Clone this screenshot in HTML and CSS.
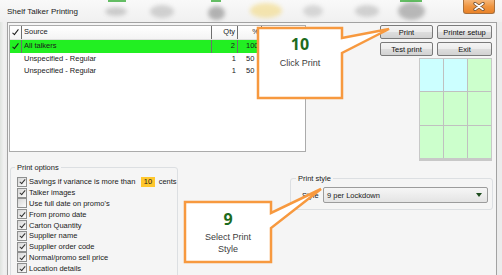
FILE: index.html
```html
<!DOCTYPE html>
<html lang="en">
<head>
    <meta charset="UTF-8">
    <title>Shelf Talker Printing</title>
    <link rel="stylesheet" href="styles.css">
</head>
<body>

<div class="window">
    <!-- Title bar (glass frame, desktop shows through) -->
    <div class="titlebar">
        <span class="blob b1"></span>
        <span class="blob b2"></span>
        <span class="blob b3"></span>
        <span class="blob b4"></span>
        <span class="blob b5"></span>
        <span class="blob b6"></span>
        <span class="blob b7"></span>
        <span class="speck s1"></span>
        <span class="speck s2"></span>
        <span class="speck s3"></span>
        <span class="title">Shelf Talker Printing</span>
        <span class="close">
            <svg width="12" height="9" viewBox="0 0 12 9">
                <path d="M2 1.5 L10 7.5 M10 1.5 L2 7.5" stroke="#6a4a30" stroke-width="3.2" stroke-linecap="round"/>
                <path d="M2 1.5 L10 7.5 M10 1.5 L2 7.5" stroke="#fff" stroke-width="1.6" stroke-linecap="round"/>
            </svg>
        </span>
    </div>

    <div class="client">
        <div class="top-row">
            <div class="listbox">
                <div class="lv-row lv-head">
                    <span class="col-chk"><i class="tick"></i></span>
                    <span class="col-src">Source</span>
                    <span class="col-qty">Qty</span>
                    <span class="col-pct">%</span>
                    <span class="col-rest"></span>
                </div>
                <div class="lv-row lv-sel">
                    <span class="col-chk"><i class="tick"></i></span>
                    <span class="col-src">All talkers</span>
                    <span class="col-qty">2</span>
                    <span class="col-pct">100</span>
                    <span class="col-rest"></span>
                </div>
                <div class="lv-row">
                    <span class="col-chk"></span>
                    <span class="col-src">Unspecified - Regular</span>
                    <span class="col-qty">1</span>
                    <span class="col-pct">50</span>
                    <span class="col-rest"></span>
                </div>
                <div class="lv-row">
                    <span class="col-chk"></span>
                    <span class="col-src">Unspecified - Regular</span>
                    <span class="col-qty">1</span>
                    <span class="col-pct">50</span>
                    <span class="col-rest"></span>
                </div>
            </div>

            <div class="side">
                <div class="btns">
                    <button>Print</button>
                    <button>Printer setup</button>
                    <button>Test print</button>
                    <button>Exit</button>
                </div>
                <div class="preview">
                    <span class="cell blue"></span>
                    <span class="cell blue"></span>
                    <span class="cell"></span>
                    <span class="cell"></span>
                    <span class="cell"></span>
                    <span class="cell"></span>
                    <span class="cell"></span>
                    <span class="cell"></span>
                    <span class="cell"></span>
                </div>
            </div>
        </div>

        <div class="bottom-row">
            <fieldset class="group options">
                <legend>Print options</legend>
                <div class="opt-list">
                    <div class="opt"><span class="cb on"></span>Savings if variance is more than<span class="var">10</span><span class="cents">cents</span></div>
                    <div class="opt"><span class="cb on"></span>Talker images</div>
                    <div class="opt"><span class="cb"></span>Use full date on promo's</div>
                    <div class="opt"><span class="cb on"></span>From promo date</div>
                    <div class="opt"><span class="cb on"></span>Carton Quantity</div>
                    <div class="opt"><span class="cb on"></span>Supplier name</div>
                    <div class="opt"><span class="cb on"></span>Supplier order code</div>
                    <div class="opt"><span class="cb on"></span>Normal/promo sell price</div>
                    <div class="opt"><span class="cb on"></span>Location details</div>
                </div>
            </fieldset>

            <fieldset class="group style">
                <legend>Print style</legend>
                <div class="style-row">
                    <span class="style-label">Style</span>
                    <div class="combo"><span>9 per Lockdown</span><i class="arrow"></i></div>
                </div>
            </fieldset>
        </div>
    </div>
</div>

<!-- Tutorial callouts laid over the dialog -->
<svg class="callouts" width="502" height="275" viewBox="0 0 502 275">
    <path d="M258 28 H342 V38 L389 29 L342 53 V98 H258 Z" fill="#fff" stroke="#f7993f" stroke-width="2.5" stroke-linejoin="miter"/>
    <path d="M185 202 H271 V213 L321 189 L271 228 V262 H185 Z" fill="#fff" stroke="#f7993f" stroke-width="2.5" stroke-linejoin="miter"/>
</svg>
<div class="callout-text c10"><b>10</b><span>Click Print</span></div>
<div class="callout-text c9"><b>9</b><span>Select Print<br>Style</span></div>

</body>
</html>
```

FILE: styles.css
```css
body {
    margin: 0;
    width: 502px;
    height: 275px;
    overflow: hidden;
    position: relative;
    font-family: "Liberation Sans", Arial, sans-serif;
    font-size: 7.5px;
    color: #1a1a1a;
    background: linear-gradient(90deg, #dfe3df 0, #f1f1f1 4px, #ececec 7px);
}
.window {
    display: flex;
    flex-direction: column;
    height: 275px;
}

/* Title bar */
.titlebar {
    position: relative;
    flex: none;
    height: 22px;
    display: flex;
    align-items: center;
    padding: 0 7px;
    background: linear-gradient(#f9f9f9, #f0f0f0);
    overflow: hidden;
}
.title {
    position: relative;
    font-size: 8px;
    color: #222;
}
.close {
    position: relative;
    margin-left: auto;
    align-self: flex-start;
    width: 32px;
    height: 14px;
    box-sizing: border-box;
    border: 1px solid #a8703c;
    border-top: 0;
    border-radius: 0 0 3px 3px;
    background: linear-gradient(#f6b77a, #ef9540 50%, #e98228);
    display: flex;
    align-items: center;
    justify-content: center;
}
.blob {
    position: absolute;
    border-radius: 50%;
    filter: blur(2px);
}
.b1 { left: 105px; top: 7px; width: 22px; height: 9px; background: #9a9a9a; opacity: .45; }
.b2 { left: 150px; top: 5px; width: 24px; height: 13px; background: #a4a4a4; opacity: .45; }
.b3 { left: 208px; top: 6px; width: 17px; height: 14px; background: #707070; opacity: .5; }
.b4 { left: 250px; top: 3px; width: 32px; height: 15px; background: #f2d05a; opacity: .45; }
.b5 { left: 303px; top: 5px; width: 20px; height: 12px; background: #a8a8a8; opacity: .4; }
.b6 { left: 355px; top: 5px; width: 24px; height: 12px; background: #9a9a9a; opacity: .4; }
.b7 { left: 398px; top: 2px; width: 27px; height: 18px; background: #7c7c7c; opacity: .5; }
.speck {
    position: absolute;
    top: 0;
    height: 2px;
    background: #3fae3f;
    opacity: .8;
}
.s1 { left: 108px; width: 18px; }
.s2 { left: 211px; width: 10px; }
.s3 { left: 400px; width: 22px; }

/* Dialog client area */
.client {
    flex: 1;
    min-height: 0;
    overflow: hidden;
    margin: 0 5px 0 7px;
    border: 1px solid #a2a2a2;
    border-bottom: 0;
    background: #f5f5f5;
    padding: 2px 4px 0 1px;
}
.top-row {
    display: flex;
    justify-content: space-between;
}

/* List view */
.listbox {
    width: 297px;
    height: 127px;
    box-sizing: border-box;
    border: 1px solid #ababab;
    background: #fff;
}
.lv-row {
    display: grid;
    grid-template-columns: 12px 190px 26px 24px 1fr;
    height: 12.5px;
    line-height: 12.5px;
}
.lv-row span {
    box-sizing: border-box;
    white-space: nowrap;
    overflow: hidden;
}
.lv-head {
    height: 13px;
    line-height: 12px;
    border-bottom: 1px solid #dedede;
    background: linear-gradient(#fff, #f4f4f4);
}
.lv-head span,
.lv-sel span {
    border-right: 1px solid #6e6e6e;
}
.lv-head .col-rest,
.lv-sel .col-rest {
    border-right: 0;
}
.lv-sel {
    background: #22ef22;
}
.col-chk {
    position: relative;
}
.col-src {
    padding-left: 2px;
}
.col-qty {
    text-align: right;
    padding-right: 2px;
}
.col-pct {
    padding-left: 8px;
}
.lv-head .col-pct {
    text-align: right;
    padding: 0 2px 0 0;
}
.tick {
    position: absolute;
    left: 4px;
    top: 2px;
    width: 2px;
    height: 6px;
    border: solid #1a1a1a;
    border-width: 0 1.3px 1.3px 0;
    transform: rotate(38deg);
}

/* Buttons and page preview */
.side {
    width: 112px;
    display: flex;
    flex-direction: column;
    align-items: flex-end;
}
.btns {
    display: grid;
    grid-template-columns: 53px 55px;
    column-gap: 4px;
    row-gap: 3px;
}
.btns button {
    height: 14px;
    padding: 0;
    font-family: "Liberation Sans", Arial, sans-serif;
    font-size: 7.5px;
    color: #111;
    border: 1px solid #7a7a7a;
    border-radius: 2px;
    background: linear-gradient(#f4f4f4 0, #ececec 50%, #dedede 50%, #d2d2d2 100%);
}
.preview {
    margin-top: 2px;
    width: 73px;
    height: 103px;
    box-sizing: border-box;
    display: grid;
    grid-template-columns: repeat(3, 1fr);
    grid-template-rows: repeat(3, 1fr);
    gap: 1px;
    background: #c0c0c0;
    border: 1px solid #c8c8c8;
    border-bottom-width: 3px;
}
.cell {
    background: #ccffcc;
}
.cell.blue {
    background: #ccffff;
}

/* Group boxes */
.bottom-row {
    display: flex;
    align-items: flex-start;
    margin-top: 1.5px;
}
.group {
    margin: 0;
    min-width: 0;
    border: 1px solid #dcdfe2;
    border-radius: 3px;
    box-sizing: border-box;
}
.group legend {
    font-size: 7.5px;
    line-height: 9px;
    padding: 0 2px;
    color: #1a1a1a;
}
.options {
    margin-left: 1px;
    width: 168px;
    height: 125px;
    padding: 0 0 0 6px;
}
.options legend {
    margin-left: -2px;
}
.opt-list {
    padding-top: 5px;
}
.opt {
    display: flex;
    align-items: center;
    height: 10.8px;
    white-space: nowrap;
}
.cb {
    position: relative;
    width: 10px;
    height: 10px;
    margin-right: 2px;
    box-sizing: border-box;
    border: 1px solid #8e8f8f;
    background: linear-gradient(135deg, #d6d6d6, #fbfbfb);
    flex: none;
}
.cb.on::after {
    content: "";
    position: absolute;
    left: 2.5px;
    top: 0.5px;
    width: 2px;
    height: 5px;
    border: solid #333;
    border-width: 0 1.3px 1.3px 0;
    transform: rotate(40deg);
}
.var {
    margin-left: 6px;
    padding: 0 2.5px;
    height: 10px;
    line-height: 10px;
    background: #ffc72c;
}
.cents {
    margin-left: 4px;
}
.style {
    margin: 11.5px -1px 0 auto;
    width: 203px;
    padding: 4px 4px 6px 11px;
}
.style legend {
    margin-left: -6px;
}
.style-row {
    display: flex;
    align-items: center;
    gap: 3px;
}
.style-label {
    width: 18px;
}
.combo {
    width: 165px;
    height: 16px;
    box-sizing: border-box;
    border: 1px solid #9c9c9c;
    border-radius: 2px;
    background: linear-gradient(#f6f6f6, #e4e4e4);
    display: flex;
    align-items: center;
    justify-content: space-between;
    padding: 0 5px 0 3px;
}
.arrow {
    width: 0;
    height: 0;
    border-left: 3px solid transparent;
    border-right: 3px solid transparent;
    border-top: 4px solid #1f4d1f;
}

/* Callouts */
.callouts {
    position: absolute;
    left: 0;
    top: 0;
    pointer-events: none;
}
.callout-text {
    position: absolute;
    text-align: center;
    color: #404040;
}
.callout-text b {
    display: block;
    font-family: "Open Sans", "Liberation Sans", sans-serif;
    font-size: 16px;
    line-height: 17px;
    color: #1d6b1d;
}
.callout-text span {
    display: block;
    font-size: 9px;
}
.c10 {
    left: 258px;
    top: 35.5px;
    width: 84px;
}
.c10 span {
    margin-top: 5px;
    line-height: 10px;
}
.c9 {
    left: 185px;
    top: 210.5px;
    width: 86px;
}
.c9 span {
    margin-top: 3.5px;
    line-height: 12px;
}
```
